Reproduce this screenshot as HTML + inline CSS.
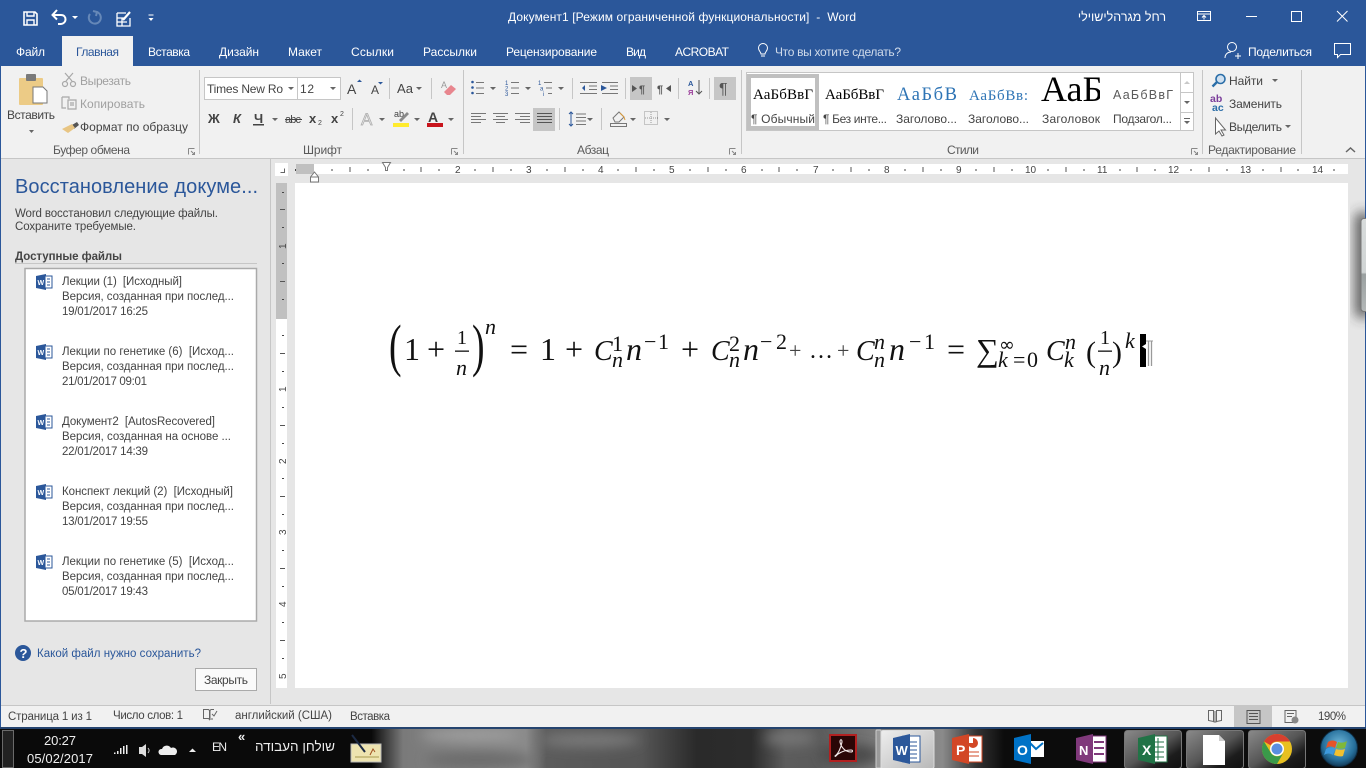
<!DOCTYPE html>
<html lang="ru"><head><meta charset="utf-8"><title>Документ1 - Word</title>
<style>
html,body{margin:0;padding:0;width:1366px;height:768px;overflow:hidden;background:#e6e6e6}
svg{display:block;position:absolute;left:0;top:0}
text{font-family:"Liberation Sans","Noto Sans CJK SC",sans-serif;font-size:12px;fill:#444;white-space:pre}
.w text,text.w{fill:#fff}
.g{fill:#5a5a5a}
.d{fill:#a0a0a0}
.s{font-size:11.5px}
.ser{font-family:"Liberation Serif",serif}
.eq text{font-family:"Liberation Serif",serif;fill:#111}
.i{font-style:italic}
.e{font-size:32px}.u{font-size:22px}.c{font-size:28px}
.sep{stroke:#c6c6c6;stroke-width:1}
.ic{fill:none;stroke:#666;stroke-width:1}
.ar{fill:#666}
</style></head><body>
<svg width="1366" height="768" viewBox="0 0 1366 768" xmlns="http://www.w3.org/2000/svg">
<defs>
<linearGradient id="wp" x1="0" x2="1" y1="0" y2="0">
<stop offset="0" stop-color="#0a0a0a"/><stop offset=".272" stop-color="#0a0a0a"/><stop offset=".295" stop-color="#7a7a7a"/><stop offset=".385" stop-color="#8a8a8a"/><stop offset=".4" stop-color="#5c5c5c"/><stop offset=".47" stop-color="#555"/><stop offset=".51" stop-color="#2a2a2a"/><stop offset=".55" stop-color="#2c2c2c"/><stop offset=".575" stop-color="#5c5c5c"/><stop offset=".6" stop-color="#5a5a5a"/><stop offset=".64" stop-color="#777"/><stop offset=".69" stop-color="#8a8a8a"/><stop offset=".715" stop-color="#333"/><stop offset=".735" stop-color="#0c0c0c"/><stop offset="1" stop-color="#0c0c0c"/>
</linearGradient>
<linearGradient id="btn" x1="0" x2="1" y1="0" y2="1"><stop offset="0" stop-color="#8a8a8a"/><stop offset=".5" stop-color="#555"/><stop offset=".75" stop-color="#1c1c1c"/><stop offset="1" stop-color="#111"/></linearGradient>
<linearGradient id="act" x1="0" x2="1" y1="0" y2="1"><stop offset="0" stop-color="#eee"/><stop offset="1" stop-color="#b8b8b8"/></linearGradient>
<linearGradient id="ovl" x1="0" x2="0" y1="0" y2="1"><stop offset="0" stop-color="#d8dcdc"/><stop offset=".58" stop-color="#d0d4d4"/><stop offset=".6" stop-color="#9aa0a0"/><stop offset="1" stop-color="#b4b8b8"/></linearGradient>
<radialGradient id="orb" cx=".5" cy=".4" r=".6"><stop offset="0" stop-color="#6fb7d8"/><stop offset=".7" stop-color="#27709c"/><stop offset="1" stop-color="#123a58"/></radialGradient>
<filter id="bl" x="-30%" y="-30%" width="160%" height="160%"><feGaussianBlur stdDeviation="6"/></filter>
<clipPath id="ab"><rect x="1035" y="72" width="65" height="40"/></clipPath>
<clipPath id="tb"><rect x="0" y="729" width="1366" height="39"/></clipPath>
</defs>

<!-- backgrounds -->
<rect width="1366" height="768" fill="#e6e6e6"/>
<rect width="1366" height="66" fill="#2b579a"/>
<rect y="66" width="1366" height="92" fill="#f1f1f1"/>
<rect y="158" width="1366" height="1" fill="#c6c6c6"/>
<rect x="0" y="0" width="1" height="728" fill="#2b579a"/>
<rect x="1365" y="0" width="1" height="728" fill="#2b579a"/>

<!-- quick access -->
<g fill="none" stroke="#fff" stroke-width="1.6">
<path d="M24 12h11l2 2v11H24z"/><path d="M27 12v4h7v-4M27 25v-5h7v5" stroke-width="1.4"/>
<path d="M53 15h8c3 0 4.500 2 4.500 4.500S63 24 61 24h-3" stroke-width="2"/><path d="M57 10l-4.500 5 4.500 4.500" stroke-width="2"/>
<path d="M97 12a6 6 0 1 1-7 2M93 11l4 1-1 4" stroke="#6688b8" stroke-width="2"/>
<path d="M117 13h9M117 13v13h13v-8M117 18h8M117 22h10M122 18v8" stroke-width="1.300"/><path d="M123 20l7-8" stroke-width="2.200"/>
</g>
<path d="M72 16h6l-3 3zM148.500 18h5l-2.500 3z" fill="#fff"/><rect x="148.500" y="14.500" width="5" height="1" fill="#fff"/>

<!-- title -->
<text class="w" x="508" y="21" textLength="348" fill="#fff" style="fill:#fff">Документ1 [Режим ограниченной функциональности]  -  Word</text>
<text x="1166" y="21" direction="rtl" style="fill:#fff;font-size:12.500px">רחל מגרהלישוילי</text>
<g fill="none" stroke="#fff" stroke-width="1">
<path d="M1197.500 11.500h13v9h-13zM1197.500 14h13M1204 19.500v-4M1202 17.500l2-2 2 2"/>
<path d="M1246 16.500h11"/><path d="M1291.500 11.500h10v10h-10z"/><path d="M1337 11l10.500 10.500M1347.500 11L1337 21.500"/>
<!-- share + comment -->
<circle cx="1232" cy="47" r="4.500"/><path d="M1225 58c0-4 3-6 6-6M1235 56h6M1238 53v6"/>
<path d="M1334.500 43.500h16v11h-10l-3 3v-3h-3z"/>
</g>

<!-- tabs -->
<rect x="62" y="36" width="71" height="30" fill="#f1f1f1"/>
<g class="w" style="fill:#fff">
<text x="16" y="56" textLength="29" style="fill:#fff">Файл</text>
<text x="76" y="56" textLength="43" style="fill:#2b579a">Главная</text>
<text x="148" y="56" textLength="42" style="fill:#fff">Вставка</text>
<text x="219" y="56" textLength="40" style="fill:#fff">Дизайн</text>
<text x="288" y="56" textLength="34" style="fill:#fff">Макет</text>
<text x="351" y="56" textLength="43" style="fill:#fff">Ссылки</text>
<text x="423" y="56" textLength="54" style="fill:#fff">Рассылки</text>
<text x="506" y="56" textLength="91" style="fill:#fff">Рецензирование</text>
<text x="626" y="56" textLength="20" style="fill:#fff">Вид</text>
<text x="675" y="56" textLength="54" style="fill:#fff">ACROBAT</text>
<text x="775" y="56" textLength="126" style="fill:#d0dbea">Что вы хотите сделать?</text>
<text x="1248" y="56" textLength="64" style="fill:#fff">Поделиться</text>
</g>
<path d="M761 56h4M761 54c0-2-2.500-3-2.500-6a4.500 4.500 0 0 1 9 0c0 3-2.500 4-2.500 6z" fill="none" stroke="#fff"/>

<!-- clipboard group -->
<rect x="19" y="78" width="24" height="27" rx="1" fill="#eccb86"/>
<rect x="26" y="74" width="10" height="7" rx="1" fill="#7a7a7a"/>
<path d="M33 87h10l4 4v12H33z" fill="#fff" stroke="#777"/>
<text x="7" y="119" textLength="48" fill="#444">Вставить</text>
<path d="M29 130h5l-2.500 3z" class="ar"/>
<g fill="none" stroke="#a8a8a8" stroke-width="1.200"><circle cx="65" cy="84" r="2.500"/><circle cx="73" cy="84" r="2.500"/><path d="M66 81l7-8M72 81l-7-8"/>
<path d="M62 97h7v2M62 97v11h4M68 100h8v9h-8zM70 103h4M70 105h4"/></g>
<text x="80" y="85" textLength="51" class="d">Вырезать</text>
<text x="80" y="108" textLength="65" class="d">Копировать</text>
<path d="M72 125l5-3 2 3-5 4z" fill="#555"/><path d="M62 129l10-5 3 4-7 5z" fill="#e8c583"/>
<text x="80" y="131" textLength="108">Формат по образцу</text>
<text x="53" y="154" textLength="77" class="g">Буфер обмена</text>
<path d="M188.500 148.500h6M188.500 148.500v6M191 151l3 3M194.500 152v2.500H192" fill="none" stroke="#888"/>
<path class="sep" d="M199.500 70v84"/>

<!-- font group -->
<rect x="204.500" y="77.500" width="136" height="22" fill="#fff" stroke="#c6c6c6"/>
<path class="sep" d="M297.500 78v21"/>
<text x="207" y="93" textLength="76">Times New Ro</text>
<path d="M288 87h6l-3 3zM330 87h6l-3 3z" class="ar"/>
<text x="300" y="93" textLength="14">12</text>
<text x="347" y="94" style="font-size:14px" textLength="11">А</text><path d="M357 82h5l-2.500-2.500z" fill="#2b579a"/>
<text x="371" y="94" style="font-size:12px" textLength="9">А</text><path d="M378 82h5l-2.500 2.500z" fill="#2b579a"/>
<path class="sep" d="M389.500 78v21"/>
<text x="397" y="93" style="font-size:13px" textLength="16">Aa</text>
<path d="M416 87h6l-3 3z" class="ar"/>
<path class="sep" d="M431.500 78v21"/>
<text x="441" y="88" style="font-size:9px;fill:#999">A</text>
<path d="M444 92l7-7 5 4-6 6h-3z" fill="#e8868e"/>
<text x="208" y="123" style="font-weight:bold;font-size:13px" textLength="13">Ж</text>
<text x="233" y="123" style="font-weight:bold;font-style:italic;font-size:13px" textLength="9">К</text>
<text x="254" y="123" style="font-weight:bold;font-size:13px" textLength="10">Ч</text><rect x="253" y="124" width="11" height="1.500" fill="#444"/>
<path d="M272 118h6l-3 3zM379 118h6l-3 3zM414 118h6l-3 3zM448 118h6l-3 3z" class="ar"/>
<text x="285" y="123" style="font-size:11px" textLength="16">abc</text><rect x="285" y="119" width="17" height="1" fill="#444"/>
<text x="309" y="123" style="font-weight:bold;font-size:13px" textLength="8">x</text><text x="318" y="125" style="font-size:7px">2</text>
<text x="331" y="123" style="font-weight:bold;font-size:13px" textLength="8">x</text><text x="340" y="116" style="font-size:7px">2</text>
<path class="sep" d="M352.500 108v22"/>
<text x="361" y="125" style="font-size:17px;fill:#e4e4e4;stroke:#aaa;stroke-width:.7px">A</text>
<text x="394" y="117" style="font-size:9px">ab</text><path d="M399 120l8-8 2 2-8 8z" fill="#8a8a8a"/>
<rect x="393" y="123" width="16" height="4" fill="#ffeb2e"/>
<text x="428" y="122" style="font-size:14px;font-weight:bold" textLength="11">А</text>
<rect x="427" y="123" width="16" height="4" fill="#c8141c"/>
<text x="303" y="154" textLength="39" class="g">Шрифт</text>
<path d="M451.500 148.500h6M451.500 148.500v6M454 151l3 3M457.500 152v2.500H455" fill="none" stroke="#888"/>
<path class="sep" d="M463.500 70v84"/>

<!-- paragraph -->
<rect x="630" y="77" width="22" height="23" fill="#c6c6c6"/><rect x="714" y="77" width="22" height="23" fill="#c6c6c6"/><rect x="533" y="108" width="22" height="23" fill="#c6c6c6"/>
<g fill="#2b579a">
<circle cx="472.500" cy="82" r="1.300"/><circle cx="472.500" cy="87.500" r="1.300"/><circle cx="472.500" cy="93" r="1.300"/>
<path d="M588 88l-6-0 3-3v6l-3-3zM601 85l6 3-6 3z"/><path d="M632 85l5 3.500-5 3.500zM671 85l-5 3.500 5 3.500z" fill="#555"/>
</g>
<path d="M476 82.500h8M476 88h8M476 93.500h8M511 82.500h8M511 88h8M511 93.500h8M544 82.500h8M546 88h6M548 93.500h4" stroke="#777" fill="none"/>
<text x="505" y="85" style="font-size:6px;fill:#2b579a">1</text><text x="505" y="90.500" style="font-size:6px;fill:#2b579a">2</text><text x="505" y="96" style="font-size:6px;fill:#2b579a">3</text>
<text x="538" y="85" style="font-size:6px;fill:#2b579a">1</text><text x="540" y="90.500" style="font-size:6px;fill:#2b579a">a</text><text x="543" y="96" style="font-size:6px;fill:#2b579a">i</text>
<path d="M490 87h6l-3 3zM525 87h6l-3 3zM558 87h6l-3 3zM587 118h6l-3 3zM630 118h6l-3 3zM664 118h6l-3 3z" class="ar"/>
<path class="sep" d="M572.500 78v21M625.500 78v21M678.500 78v21M709.500 78v21M559.500 108v22M601.500 108v22"/>
<path d="M580 82.500h17M589 86h8M589 89.500h8M580 93.500h17M602 82.500h16M610 86h8M610 89.500h8M602 93.500h16" stroke="#777" fill="none"/>
<path d="M591 80v0" stroke="#2b579a"/>
<text x="639" y="93" style="font-size:11px;fill:#555;font-weight:bold">¶</text>
<text x="657" y="93" style="font-size:11px;fill:#555;font-weight:bold">¶</text>
<text x="688" y="86" style="font-size:7.500px;fill:#2b579a;font-weight:bold">А</text>
<text x="688" y="95" style="font-size:7.500px;fill:#9a3d9a;font-weight:bold">Я</text>
<path d="M699 80v14M696 91l3 3 3-3" stroke="#555" fill="none"/>
<text x="719" y="94" style="font-size:16px;fill:#555">¶</text>
<path d="M471 113.500h15M471 116.500h10M471 119.500h15M471 122.500h10M493 113.500h15M496 116.500h9M493 119.500h15M496 122.500h9M515 113.500h15M520 116.500h10M515 119.500h15M520 122.500h10" stroke="#777" fill="none"/>
<path d="M537 113.500h15M537 116.500h15M537 119.500h15M537 122.500h15" stroke="#555" fill="none"/>
<path d="M571 112v14M569 114l2-2 2 2M569 124l2 2 2-2" stroke="#2b579a" fill="none"/>
<path d="M576 114h10M576 117.500h10M576 121h10M576 124.500h10" stroke="#777" fill="none"/>
<path d="M610.500 123.500h16v3h-16zM613 118l6-6 5 5-5 5h-4z" fill="none" stroke="#777"/><path d="M620 113l4 4 1 3" fill="none" stroke="#d89a3a"/>
<path d="M644.500 111.500h13v13h-13z" fill="none" stroke="#999" stroke-dasharray="1 1"/><path d="M651 112v13M645 118h13" stroke="#999" stroke-dasharray="1 1"/>
<text x="577" y="154" textLength="32" class="g">Абзац</text>
<path d="M729.500 148.500h6M729.500 148.500v6M732 151l3 3M735.500 152v2.500H733" fill="none" stroke="#888"/>
<path class="sep" d="M741.500 70v84"/>

<!-- styles -->
<rect x="746.500" y="72.500" width="447" height="58" fill="#fff" stroke="#c6c6c6"/>
<rect x="749" y="76" width="68" height="52" fill="#fff" stroke="#c0c0c0" stroke-width="4"/>
<text class="ser" x="753" y="99" style="font-size:15px;fill:#000" textLength="60">АаБбВвГ</text>
<text class="ser" x="825" y="99" style="font-size:15px;fill:#000" textLength="59">АаБбВвГ</text>
<text class="ser" x="897" y="100" style="font-size:18.500px;fill:#2e74b5" textLength="60">АаБбВ</text>
<text class="ser" x="969" y="100" style="font-size:15px;fill:#2e74b5" textLength="59">АаБбВв:</text>
<text class="ser" x="1041" y="101" clip-path="url(#ab)" style="font-size:36px;fill:#000">АаБ</text>
<text x="1113" y="99" style="font-size:12.500px;fill:#5a5a5a" textLength="60">АаБбВвГ</text>
<text x="751" y="123" textLength="64">¶ Обычный</text>
<text x="823" y="123" textLength="64">¶ Без инте...</text>
<text x="896" y="123" textLength="61">Заголово...</text>
<text x="968" y="123" textLength="61">Заголово...</text>
<text x="1042" y="123" textLength="58">Заголовок</text>
<text x="1113" y="123" textLength="59">Подзагол...</text>
<path class="sep" d="M1180.500 73v57M1181 92.500h13M1181 112.500h13"/>
<path d="M1184 84l3-3 3 3z" fill="#c8c8c8"/><path d="M1184 101h6l-3 3z" fill="#666"/><path d="M1184 118.500h6M1184 121h6l-3 3z" stroke="none" fill="#666"/><rect x="1184" y="118" width="6" height="1" fill="#666"/>
<text x="947" y="154" textLength="32" class="g">Стили</text>
<path d="M1191.500 148.500h6M1191.500 148.500v6M1194 151l3 3M1197.500 152v2.500H1195" fill="none" stroke="#888"/>
<path class="sep" d="M1202.500 70v84"/>

<!-- editing -->
<circle cx="1220.500" cy="79" r="4.500" fill="#cfe0f0" stroke="#2b6ea8" stroke-width="1.600"/><path d="M1217 82l-4.500 4.500" stroke="#2b6ea8" stroke-width="2.400"/>
<text x="1229" y="85" textLength="34">Найти</text><path d="M1272 79h6l-3 3z" class="ar"/>
<text x="1210" y="102" style="font-size:10.500px;fill:#7a3d9a;font-weight:bold">ab</text>
<text x="1212" y="111" style="font-size:10.500px;fill:#2b6ea8;font-weight:bold">ac</text>
<text x="1229" y="108" textLength="53">Заменить</text>
<path d="M1215.500 118v16l3.500-3 3 5 2-1-3-5h4.500z" fill="#fff" stroke="#666"/>
<text x="1229" y="131" textLength="53">Выделить</text><path d="M1285 125h6l-3 3z" class="ar"/>
<text x="1208" y="154" textLength="88" class="g">Редактирование</text>
<path class="sep" d="M1301.500 70v84"/>
<path d="M1346 152l4.500-4 4.500 4" fill="none" stroke="#666" stroke-width="1.500"/>

<!-- task pane -->
<path d="M270.500 159v545" stroke="#c6c6c6"/>
<text x="15" y="193" textLength="243" style="font-size:20px;fill:#2b579a">Восстановление докуме...</text>
<text class="s" x="15" y="217" textLength="203">Word восстановил следующие файлы.</text>
<text class="s" x="15" y="230" textLength="121">Сохраните требуемые.</text>
<text x="15" y="260" textLength="107" style="font-weight:bold;font-size:11.500px">Доступные файлы</text>
<rect x="15" y="263" width="242" height="1" fill="#c6c6c6"/>
<rect x="25" y="268.500" width="231.500" height="352.500" fill="#fff" stroke="#aaa" stroke-width="1.500"/>

<g id="list">
<path d="M36 276l10-2v16l-10-2z" fill="#2b579a"/><path d="M45 276h7v12h-7z" fill="#fff" stroke="#2b579a"/><path d="M47 279h3M47 282h3M47 285h3" stroke="#2b579a"/><text x="37.500" y="285" style="font-size:7px;font-weight:bold;fill:#fff">W</text>
<text class="s" x="62" y="285" textLength="120">Лекции (1)  [Исходный]</text>
<text class="s" x="62" y="300" textLength="172">Версия, созданная при послед...</text>
<text class="s" x="62" y="315" textLength="86">19/01/2017 16:25</text>

<path d="M36 346l10-2v16l-10-2z" fill="#2b579a"/><path d="M45 346h7v12h-7z" fill="#fff" stroke="#2b579a"/><path d="M47 349h3M47 352h3M47 355h3" stroke="#2b579a"/><text x="37.500" y="355" style="font-size:7px;font-weight:bold;fill:#fff">W</text>
<text class="s" x="62" y="355" textLength="172">Лекции по генетике (6)  [Исход...</text>
<text class="s" x="62" y="370" textLength="172">Версия, созданная при послед...</text>
<text class="s" x="62" y="385" textLength="85">21/01/2017 09:01</text>

<path d="M36 416l10-2v16l-10-2z" fill="#2b579a"/><path d="M45 416h7v12h-7z" fill="#fff" stroke="#2b579a"/><path d="M47 419h3M47 422h3M47 425h3" stroke="#2b579a"/><text x="37.500" y="425" style="font-size:7px;font-weight:bold;fill:#fff">W</text>
<text class="s" x="62" y="425" textLength="153">Документ2  [AutosRecovered]</text>
<text class="s" x="62" y="440" textLength="169">Версия, созданная на основе ...</text>
<text class="s" x="62" y="455" textLength="86">22/01/2017 14:39</text>

<path d="M36 486l10-2v16l-10-2z" fill="#2b579a"/><path d="M45 486h7v12h-7z" fill="#fff" stroke="#2b579a"/><path d="M47 489h3M47 492h3M47 495h3" stroke="#2b579a"/><text x="37.500" y="495" style="font-size:7px;font-weight:bold;fill:#fff">W</text>
<text class="s" x="62" y="495" textLength="171">Конспект лекций (2)  [Исходный]</text>
<text class="s" x="62" y="510" textLength="172">Версия, созданная при послед...</text>
<text class="s" x="62" y="525" textLength="86">13/01/2017 19:55</text>

<path d="M36 556l10-2v16l-10-2z" fill="#2b579a"/><path d="M45 556h7v12h-7z" fill="#fff" stroke="#2b579a"/><path d="M47 559h3M47 562h3M47 565h3" stroke="#2b579a"/><text x="37.500" y="565" style="font-size:7px;font-weight:bold;fill:#fff">W</text>
<text class="s" x="62" y="565" textLength="172">Лекции по генетике (5)  [Исход...</text>
<text class="s" x="62" y="580" textLength="172">Версия, созданная при послед...</text>
<text class="s" x="62" y="595" textLength="86">05/01/2017 19:43</text>
</g>

<circle cx="23" cy="653" r="8" fill="#2b579a"/>
<text x="19.500" y="658" style="font-size:13px;font-weight:bold;fill:#fff">?</text>
<text x="37" y="657" textLength="164" class="s" style="fill:#2b579a">Какой файл нужно сохранить?</text>
<rect x="195.500" y="668.500" width="61" height="22" fill="#fafafa" stroke="#aaa"/>
<text x="204" y="684" textLength="44">Закрыть</text>

<!-- rulers -->
<rect x="275" y="163" width="13" height="13" fill="#fff"/><path d="M280.500 172.500h4v-4" fill="none" stroke="#666"/>
<rect x="296" y="164" width="1052" height="10" fill="#fff"/>
<rect x="296" y="164" width="18" height="10" fill="#c0c0c0"/>
<path d="M295.500 169v2M332 169v2M368 169v2M404 169v2M439 169v2M475 169v2M511 169v2M547 169v2M583 169v2M618 169v2M654 169v2M690 169v2M726 169v2M762 169v2M797 169v2M833 169v2M869 169v2M905 169v2M941 169v2M976 169v2M1012 169v2M1048 169v2M1084 169v2M1120 169v2M1155 169v2M1191 169v2M1227 169v2M1263 169v2M1298 169v2M1334 169v2" stroke="#444"/>
<path d="M350 167v5M421 167v5M493 167v5M565 167v5M636 167v5M708 167v5M779 167v5M851 167v5M923 167v5M994 167v5M1066 167v5M1137 167v5M1209 167v5M1281 167v5" stroke="#555"/>
<g style="font-size:10px">
<text x="455" y="173" style="font-size:10px">2</text><text x="526" y="173" style="font-size:10px">3</text><text x="598" y="173" style="font-size:10px">4</text><text x="669" y="173" style="font-size:10px">5</text><text x="741" y="173" style="font-size:10px">6</text><text x="813" y="173" style="font-size:10px">7</text><text x="884" y="173" style="font-size:10px">8</text><text x="956" y="173" style="font-size:10px">9</text><text x="1025" y="173" style="font-size:10px">10</text><text x="1097" y="173" style="font-size:10px">11</text><text x="1168" y="173" style="font-size:10px">12</text><text x="1240" y="173" style="font-size:10px">13</text><text x="1312" y="173" style="font-size:10px">14</text>
</g>
<path d="M382.500 162.500h8l-3 5v3h-2v-3z" fill="#fff" stroke="#777"/>
<path d="M310.500 177l4-5 4 5v5h-8zM310.500 177h8" fill="#fff" stroke="#777"/>

<rect x="276" y="183" width="11" height="505" fill="#fff"/>
<rect x="276" y="183" width="11" height="136" fill="#c0c0c0"/>
<path d="M282 192.500h2M282 227.500h2M282 263.500h2M282 299.500h2M282 335.500h2M282 371.500h2M282 407.500h2M282 443.500h2M282 478.500h2M282 514.500h2M282 550.500h2M282 586.500h2M282 622.500h2M282 658.500h2" stroke="#444"/>
<path d="M280 209.500h5M280 281.500h5M280 353.500h5M280 425.500h5M280 496.500h5M280 568.500h5M280 640.500h5" stroke="#555"/>
<text transform="translate(286,249) rotate(-90)" style="font-size:10px">1</text>
<text transform="translate(286,392) rotate(-90)" style="font-size:10px">1</text>
<text transform="translate(286,464) rotate(-90)" style="font-size:10px">2</text>
<text transform="translate(286,535) rotate(-90)" style="font-size:10px">3</text>
<text transform="translate(286,607) rotate(-90)" style="font-size:10px">4</text>
<text transform="translate(286,679) rotate(-90)" style="font-size:10px">5</text>

<!-- page -->
<rect x="295" y="183" width="1053" height="505" fill="#fff"/>

<!-- equation -->
<g class="eq">
<text transform="translate(389,365) scale(.65,1)" style="font-size:58px">(</text>
<text class="e" x="404" y="360">1</text>
<text class="e" x="427" y="360">+</text>
<text x="457" y="344" style="font-size:20px">1</text>
<rect x="455" y="350.500" width="14" height="1.300" fill="#111"/>
<text class="i" x="456" y="375" style="font-size:22px">n</text>
<text transform="translate(472,365) scale(.65,1)" style="font-size:58px">)</text>
<text class="i u" x="485" y="334">n</text>
<text class="e" x="510" y="360">=</text>
<text class="e" x="540" y="360">1</text>
<text class="e" x="565" y="360">+</text>
<text class="i c" x="594" y="360">C</text>
<text class="u" x="612" y="351">1</text>
<text class="i u" x="612" y="367">n</text>
<text class="i e" x="626" y="360">n</text>
<text class="u" x="644" y="349">−</text>
<text class="u" x="658" y="349">1</text>
<text class="e" x="681" y="360">+</text>
<text class="i c" x="711" y="360">C</text>
<text class="u" x="729" y="351">2</text>
<text class="i u" x="729" y="367">n</text>
<text class="i e" x="743" y="360">n</text>
<text class="u" x="760" y="349">−</text>
<text class="u" x="776" y="349">2</text>
<text x="789" y="358" style="font-size:22px;fill:#444" textLength="17">+</text>
<text x="809" y="358" style="font-size:24px">…</text>
<text x="837" y="358" style="font-size:22px;fill:#444" textLength="17">+</text>
<text class="i c" x="856" y="360">C</text>
<text class="i u" x="874" y="349">n</text>
<text class="i u" x="874" y="367">n</text>
<text class="i e" x="889" y="360">n</text>
<text class="u" x="909" y="349">−</text>
<text class="u" x="924" y="349">1</text>
<text class="e" x="947" y="360">=</text>
<text x="976" y="361" style="font-size:32px">∑</text>
<text class="i u" x="998" y="367">k</text>
<text class="u" x="1013" y="367">=</text>
<text class="u" x="1027" y="367">0</text>
<text class="u" x="999" y="351" style="font-family:'DejaVu Sans',serif;font-size:19px">∞</text>
<text class="i c" x="1046" y="360">C</text>
<text class="i u" x="1065" y="349">n</text>
<text class="i u" x="1064" y="367">k</text>
<text x="1086" y="362" style="font-size:30px">(</text>
<text x="1100" y="344" style="font-size:20px">1</text>
<rect x="1098" y="350.500" width="14" height="1.300" fill="#111"/>
<text class="i" x="1099" y="375" style="font-size:22px">n</text>
<text x="1112" y="362" style="font-size:30px">)</text>
<text class="i u" x="1125" y="348">k</text>
<rect x="1140" y="334" width="6" height="33" fill="#000"/>
<path d="M1146 344l-4 2.500 4 2.500z" fill="#fff"/>
<path d="M1148.500 341v25M1151.500 341v25" stroke="#9a9a9a" stroke-width="1.300"/><path d="M1146 341h7" stroke="#9a9a9a"/>
</g>

<!-- floating overlay at right edge -->
<rect x="1355" y="212" width="16" height="106" rx="6" fill="#333" opacity=".75" filter="url(#bl)"/>
<rect x="1361" y="218.500" width="8" height="93" rx="3" fill="url(#ovl)" stroke="#777"/>
<rect x="1365" y="183" width="1" height="35" fill="#2b579a"/>

<!-- status bar -->
<rect y="705" width="1366" height="22" fill="#f1f1f1"/>
<rect x="1" y="705" width="1364" height="1" fill="#c6c6c6"/>
<rect y="705" width="1" height="23" fill="#2b579a"/><rect x="1365" y="705" width="1" height="23" fill="#2b579a"/>
<text class="s" x="8" y="720" textLength="84">Страница 1 из 1</text>
<text class="s" x="113" y="719" textLength="70">Число слов: 1</text>
<path d="M203.500 709.500h5l1 1v9l-1-1h-5zM210 710.500l1-1h3M210 710v10M211 719h2" fill="none" stroke="#666"/><path d="M212 714l2 2 3-5" fill="none" stroke="#666"/>
<text class="s" x="235" y="719" textLength="97">английский (США)</text>
<text class="s" x="350" y="720" textLength="40">Вставка</text>
<rect x="1234" y="706" width="38" height="21" fill="#c6c6c6"/>
<path d="M1208.500 710.500h5v11l-5-1zM1221.500 710.500h-5v11l5-1zM1214 711v11h2v-11" fill="none" stroke="#666"/>
<path d="M1247 710.500h13v13h-13zM1249 713.500h9M1249 716.500h9M1249 719.500h9" fill="none" stroke="#555"/>
<path d="M1285 710.500h11v12h-11zM1287 713.500h7M1287 716.500h5" fill="none" stroke="#666"/><circle cx="1295" cy="720" r="3.500" fill="#888"/>
<text x="1318" y="720" class="s" textLength="28">190%</text>

<!-- taskbar -->
<rect y="727" width="1366" height="2" fill="#25446f"/>
<g clip-path="url(#tb)">
<rect y="729" width="1366" height="39" fill="url(#wp)"/>
<g filter="url(#bl)">
<ellipse cx="480" cy="760" rx="55" ry="8" fill="#6a6a6a"/>
<ellipse cx="590" cy="740" rx="50" ry="7" fill="#7a7a7a"/>
<ellipse cx="470" cy="735" rx="50" ry="6" fill="#a0a0a0"/>
<ellipse cx="790" cy="738" rx="26" ry="7" fill="#777"/>
<ellipse cx="850" cy="755" rx="30" ry="10" fill="#4a4a4a"/>
</g>
<!-- show desktop -->
<rect x="2.500" y="730.500" width="11" height="37" fill="#222" stroke="#6a6a6a"/>
<text x="44" y="745" textLength="32" style="font-size:13px;fill:#eee">20:27</text>
<text x="27" y="763" textLength="66" style="font-size:13px;fill:#eee">05/02/2017</text>
<path d="M114 754h1.500v-1.500H114zM117 754h1.500v-3H117zM120 754h1.500v-6H120zM123 754h1.500v-8H123zM126 754h1.500v-9H126z" fill="#eee" stroke="none"/>
<path d="M139 747h3l4-3v13l-4-3h-3z" fill="#ddd"/><path d="M148 748c1.500 2 1.500 3 0 5" stroke="#ccc" fill="none"/>
<path d="M161 755a3 3 0 0 1 1-6 5 5 0 0 1 9-1 4 4 0 0 1 4 7z" fill="#eee"/>
<path d="M189 752h7l-3.500-3.500z" fill="#eee"/>
<text x="212" y="751" textLength="15" style="fill:#eee">EN</text>
<text x="238" y="741" style="font-size:13px;fill:#eee;font-weight:bold">«</text>
<text x="335" y="751" direction="rtl" style="font-size:13.500px;fill:#eee">שולחן העבודה</text>
<rect x="351" y="744" width="30" height="18" fill="#eee4b0" stroke="#bbb"/>
<path d="M352 735l13 17" stroke="#1c2a44" stroke-width="2"/><path d="M355 757h24" stroke="#a89a50"/><path d="M370 755l3-6 2 3" fill="none" stroke="#a05020"/>

<!-- acrobat -->
<rect x="830" y="735" width="26" height="26" fill="#2a0606" stroke="#b22020" stroke-width="2"/>
<path d="M835 756c3-2 6-8 7-14 0-3-2-3-2 0 1 5 5 10 11 10 2 0 2-2 0-2-5 0-10 2-13 4-2 2-3 3-3 2z" fill="none" stroke="#f2e8e8" stroke-width="1.100"/>

<!-- stacked + active word -->
<rect x="876" y="730" width="5" height="38" rx="1" fill="#9a9a9a" stroke="#ccc"/>
<rect x="881" y="730.500" width="53" height="38" rx="2" fill="url(#act)" stroke="#ddd"/>
<path d="M903 736h17v26h-17z" fill="#fff" stroke="#2b579a"/><path d="M907 742h10M907 746h10M907 750h10M907 754h10M907 758h10" stroke="#2b579a"/>
<path d="M893 738l17-4v30l-17-4z" fill="#2b579a"/><text x="895.500" y="755" style="font-size:13px;font-weight:bold;fill:#fff">W</text>

<!-- powerpoint -->
<path d="M964 736h18v26h-18z" fill="#fff" stroke="#d24726"/><path d="M968 743a5 5 0 1 0 5-5v5z" fill="#d24726"/><path d="M968 752h11M968 756h11" stroke="#d24726"/>
<path d="M952 738l17-4v30l-17-4z" fill="#d24726"/><text x="956" y="755" style="font-size:14px;font-weight:bold;fill:#fff">P</text>
<!-- outlook -->
<rect x="1029" y="741" width="15" height="16" fill="#fff"/><path d="M1030 743l6 6 7-6" fill="none" stroke="#0072c6" stroke-width="2"/>
<path d="M1014 738l17-4v30l-17-4z" fill="#0072c6"/><text x="1017" y="755" style="font-size:14px;font-weight:bold;fill:#fff">O</text>
<!-- onenote -->
<path d="M1088 736h18v26h-18z" fill="#fff" stroke="#80397b"/><path d="M1094 742h10M1094 748h10M1094 754h10" stroke="#80397b" stroke-width="2"/>
<path d="M1076 738l17-4v30l-17-4z" fill="#80397b"/><text x="1079" y="755" style="font-size:13px;font-weight:bold;fill:#fff">N</text>
<!-- excel btn -->
<rect x="1124.500" y="730.500" width="57" height="38" rx="3" fill="url(#btn)" stroke="#777"/>
<path d="M1150 736h17v26h-17z" fill="#fff" stroke="#217346"/><path d="M1153 742h11M1153 747h11M1153 752h11M1153 757h11M1158 738v22" stroke="#217346"/>
<path d="M1138 738l17-4v30l-17-4z" fill="#217346"/><text x="1142" y="755" style="font-size:14px;font-weight:bold;fill:#fff">X</text>
<!-- file btn -->
<rect x="1186.500" y="730.500" width="57" height="38" rx="3" fill="url(#btn)" stroke="#777"/>
<path d="M1203 735h16l6 6v24h-22z" fill="#fff"/><path d="M1219 735v6h6" fill="#ccc"/>
<!-- chrome btn -->
<rect x="1248.500" y="730.500" width="57" height="38" rx="3" fill="url(#btn)" stroke="#777"/>
<circle cx="1277" cy="749" r="15" fill="#e8c020"/>
<path d="M1277 734a15 15 0 0 1 13 7.500h-13a7.500 7.500 0 0 0-6.500 3.700l-6.500-3.700a15 15 0 0 1 13-7.500z" fill="#d8402f"/><path d="M1264 741.500a15 15 0 0 0 13 22.500l6.500-11.200a7.500 7.500 0 0 1-13-.5z" fill="#3a9a4a"/>
<circle cx="1277" cy="749" r="7" fill="#fff"/><circle cx="1277" cy="749" r="5.500" fill="#5a8fe0"/>
<!-- start orb -->
<circle cx="1339" cy="748" r="18.500" fill="url(#orb)" stroke="#0d2c44"/>
<path d="M1328 742c3-2 6-2 9 0l-2 6c-3-2-6-2-9 0z" fill="#e5542a"/>
<path d="M1338 742c3 1 6 1 9-1l-2 7c-3 1-6 1-9 0z" fill="#7fb83a"/>
<path d="M1326 749c3-2 6-2 9 0l-2 6c-3-2-6-2-9 0z" fill="#3d9ade"/>
<path d="M1336 749c3 1 6 1 9 0l-2 7c-3 1-6 0-9-1z" fill="#f3c12e"/>
</g>
</svg>
</body></html>
